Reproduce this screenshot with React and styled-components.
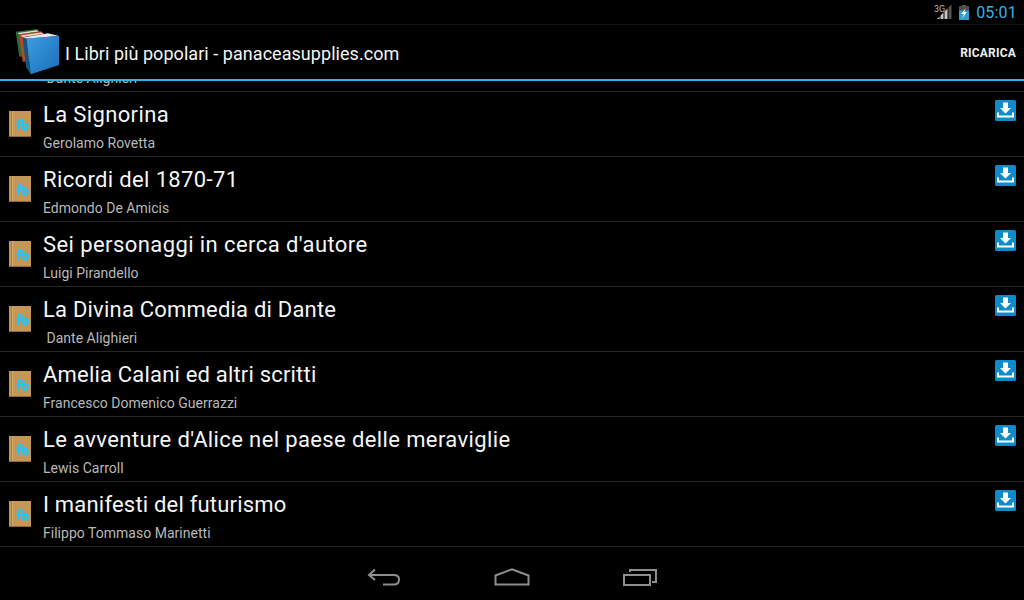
import React from 'react';
import styled, { createGlobalStyle } from 'styled-components';

const Global = createGlobalStyle`
  html, body { margin: 0; padding: 0; background: #000; }
  * { box-sizing: border-box; }
`;

const Screen = styled.div`
  width: 1024px; height: 600px; background: #000; display: flex; flex-direction: column;
  overflow: hidden; font-family: Roboto, "Liberation Sans", sans-serif; color: #fff;
`;
const StatusBar = styled.div`
  height: 25px; flex: none; display: flex; align-items: center; justify-content: flex-end;
  padding-right: 7px; border-bottom: 1px solid #111; position: relative; z-index: 2; background: #000;
`;
const Clock = styled.span`
  font-size: 16px; color: #33b5e5; margin-left: 7px; line-height: 25px; letter-spacing: 0.2px;
`;
const ActionBar = styled.div`
  height: 56px; flex: none; display: flex; align-items: center; background: #000;
  border-bottom: 2px solid #33b5e5; position: relative; z-index: 2; padding-right: 8px;
`;
const Logo = styled.svg`
  width: 48px; height: 48px; margin-left: 13px; flex: none; overflow: visible;
`;
const AppTitle = styled.div`
  font-size: 18px; margin-left: 4px; flex: 1; color: #f4f4f4; white-space: nowrap;
  letter-spacing: 0.05px; padding-top: 2px;
`;
const ActionButton = styled.div`
  font-size: 12px; font-weight: 700; color: #eee; letter-spacing: 0.2px; padding-top: 2px;
`;
const List = styled.div`
  flex: 1; min-height: 0; overflow: hidden;
`;
const ListInner = styled.div`
  margin-top: -54px;
`;
const Row = styled.div`
  height: 65px; display: flex; border-bottom: 1px solid #262626; position: relative;
`;
const BookSlot = styled.div`
  width: 43px; flex: none; padding: 19px 0 0 9px;
`;
const Texts = styled.div`
  flex: 1; min-width: 0; padding-top: 8px;
`;
const Title = styled.div`
  font-size: 22px; line-height: 30px; color: #f5f5f5; white-space: nowrap;
  letter-spacing: ${(p) => p.$tracking}px;
`;
const Sub = styled.div`
  font-size: 14px; line-height: 18px; margin-top: 4px; color: #b8b8b8; white-space: pre; letter-spacing: 0.02px;
`;
const Download = styled.div`
  width: 21px; height: 21px; margin: 8px 8px 0 0; flex: none;
`;
const NavBar = styled.div`
  height: 53px; flex: none; display: flex; justify-content: center; align-items: flex-start;
  padding-top: 21px; background: #000;
`;
const NavSlot = styled.div`
  width: 128px; display: flex; justify-content: center;
`;

const BookIcon = () => (
  <svg width="22" height="26" viewBox="0 0 22 26">
    <rect x="0" y="0" width="22" height="26" fill="#c49658" />
    <rect x="2" y="0" width="1" height="26" fill="#a87c43" />
    <rect x="3" y="0" width="1" height="26" fill="#d6ac72" />
    <rect x="0" y="25" width="22" height="1" fill="#8f6a36" />
    <path d="M9.5 19V11Q9.5 9 12 9M7.5 13.5H12" fill="none" stroke="#26c4f4" strokeWidth="2.4" />
    <path d="M14 9V16Q14 18.5 16.3 18.5Q18.6 18.5 18.6 15.7Q18.6 13 16.3 13Q14.8 13 14 14.2" fill="none" stroke="#26c4f4" strokeWidth="2.4" />
  </svg>
);
const DownloadIcon = () => (
  <svg width="21" height="21" viewBox="0 0 21 21">
    <rect width="21" height="21" rx="1.5" fill="#0f8acb" />
    <path d="M8 2.5H13V8H16L10.5 13.5L5 8H8Z" fill="#fff" />
    <path d="M3 12.5V16.5H18V12.5" fill="none" stroke="#fff" strokeWidth="2" />
  </svg>
);

const books = [
  ['', ' Dante Alighieri', 0],
  ['La Signorina', 'Gerolamo Rovetta', 0.36],
  ['Ricordi del 1870-71', 'Edmondo De Amicis', 0.36],
  ["Sei personaggi in cerca d'autore", 'Luigi Pirandello', 0.42],
  ['La Divina Commedia di Dante', ' Dante Alighieri', 0.21],
  ['Amelia Calani ed altri scritti', 'Francesco Domenico Guerrazzi', 0.19],
  ["Le avventure d'Alice nel paese delle meraviglie", 'Lewis Carroll', 0.38],
  ['I manifesti del futurismo', 'Filippo Tommaso Marinetti', 0.2],
];

export default function App() {
  return (
    <Screen>
      <Global />
      <StatusBar>
        <svg width="18" height="18" viewBox="0 0 18 18">
          <text x="0" y="9" fontSize="9" fill="#b5b5b5" fontFamily="Roboto">3G</text>
          <path d="M17.5 1.5V16H14.5V4.5Z" fill="#555" />
          <path d="M13.5 5.5V16H10.5V8.5ZM9.5 9.5V16H6.5V12.5Z" fill="#c4c4c4" />
          <path d="M5.5 13.5V16H3Z" fill="#c4c4c4" />
        </svg>
        <svg width="10" height="15" viewBox="0 0 10 15" style={{ marginLeft: 7 }}>
          <rect x="3" y="0" width="4" height="2" fill="#555" />
          <rect x="0" y="1.5" width="10" height="13.5" fill="#2f9fd0" />
          <rect x="0" y="1.5" width="10" height="4" fill="#4a4a4a" />
          <path d="M6.8 3L2.2 9H4.8L3.2 13.5L7.8 7H5.2Z" fill="#fff" />
        </svg>
        <Clock>05:01</Clock>
      </StatusBar>
      <ActionBar>
        <Logo viewBox="0 0 48 48">
          <defs>
            <linearGradient id="front" x1="0" y1="0" x2="1" y2="1">
              <stop offset="0" stopColor="#3b9de2" />
              <stop offset="1" stopColor="#1a6fb8" />
            </linearGradient>
          </defs>
          <path d="M2.7 3.7L23.7 1L26 3V28L6.3 28.7Z" fill="#2f6a35" />
          <path d="M4.5 5L24 2.3L26 3.5L6.5 6.2Z" fill="#d9e6d9" />
          <path d="M6 6.3L28 3.3L30 5V33L9.7 33.7Z" fill="#b0482c" />
          <path d="M7.5 7.5L28 4.6L31 5.6L10 9Z" fill="#eadcd4" />
          <path d="M9.7 9.7L35 5.3L46 8L13.7 10.5Z" fill="#e3ebf0" />
          <path d="M9.7 9.7L13.7 10.5L17.7 46.3L13 39Z" fill="#125680" />
          <path d="M13.7 10.5L46 8V37L17.7 46.3Z" fill="url(#front)" />
        </Logo>
        <AppTitle>I Libri più popolari - panaceasupplies.com</AppTitle>
        <ActionButton>RICARICA</ActionButton>
      </ActionBar>
      <List>
        <ListInner>
          {books.map(([t, a, tracking], i) => (
            <Row key={i}>
              <BookSlot><BookIcon /></BookSlot>
              <Texts>
                <Title $tracking={tracking}>{t || '\u00a0'}</Title>
                <Sub>{a}</Sub>
              </Texts>
              <Download><DownloadIcon /></Download>
            </Row>
          ))}
        </ListInner>
      </List>
      <NavBar>
        <NavSlot>
          <svg width="34" height="18" viewBox="0 0 34 18" fill="none" stroke="#8e8e8e" strokeWidth="2">
            <path d="M8 1.5L2 7L8 12M2 7H27Q32 7 32 11.5Q32 16.5 27 16.5H16" />
          </svg>
        </NavSlot>
        <NavSlot>
          <svg width="36" height="18" viewBox="0 0 36 18" fill="none" stroke="#8e8e8e" strokeWidth="2">
            <path d="M1.5 16.5V7.5L18 1.2L34.5 7.5V16.5Z" />
          </svg>
        </NavSlot>
        <NavSlot>
          <svg width="34" height="18" viewBox="0 0 34 18" fill="none" stroke="#8e8e8e" strokeWidth="2">
            <rect x="1" y="7" width="26" height="10" />
            <path d="M7 4V2H33V14H29" />
          </svg>
        </NavSlot>
      </NavBar>
    </Screen>
  );
}
